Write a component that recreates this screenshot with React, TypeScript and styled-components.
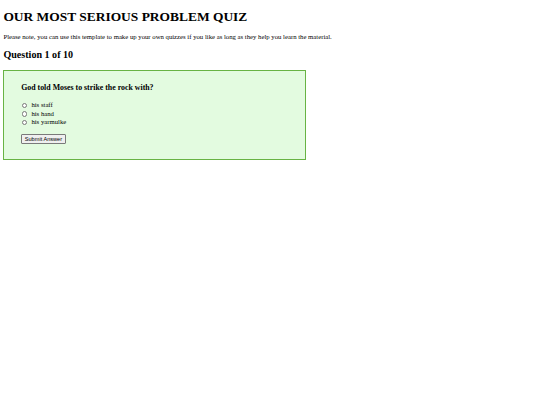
import React from "react";
import styled, { createGlobalStyle } from "styled-components";

const Global = createGlobalStyle`
  html, body { margin: 0; padding: 0; background: #fff; }
  body { font-family: "Liberation Serif", "Times New Roman", serif; color: #000; }
`;

const Page = styled.div`
  padding: 0 3.4px;
`;

const Title = styled.h1`
  font-size: 13.44px;
  font-weight: bold;
  line-height: 15.4px;
  margin: 8.6px 0 0 0;
`;

const Note = styled.p`
  font-size: 6.72px;
  line-height: 7.7px;
  margin: 9px 0 0 0;
`;

const QNum = styled.h2`
  font-size: 10.08px;
  font-weight: bold;
  line-height: 11.6px;
  margin: 8.6px 0 0 0;
`;

const Card = styled.div`
  margin-top: 9px;
  width: 303px;
  box-sizing: border-box;
  border: 1.6px solid #68b344;
  background: #e3fbe0;
  padding: 12.2px 16px 15px 16.8px;
`;

const Form = styled.form`
  display: flex;
  flex-direction: column;
`;

const Question = styled.h3`
  font-size: 7.86px;
  font-weight: bold;
  line-height: 9px;
  margin: 0;
`;

const Options = styled.div`
  margin-top: 9.2px;
  display: flex;
  flex-direction: column;
`;

const Option = styled.label`
  display: flex;
  align-items: center;
  gap: 4px;
  font-size: 6.72px;
  line-height: 8.5px;
  height: 8.5px;
`;

const Radio = styled.input.attrs({ type: "radio" })`
  appearance: none;
  width: 5.2px;
  height: 5.2px;
  margin: 0 0 0 1px;
  border: 0.6px solid #7a7a7a;
  border-radius: 50%;
  background: #fff;
  box-sizing: border-box;
  flex: none;
`;

const Submit = styled.button`
  margin-top: 7.5px;
  align-self: flex-start;
  font-family: "Liberation Sans", Arial, sans-serif;
  font-size: 5.6px;
  line-height: 6.5px;
  padding: 0.6px 2.6px;
  border: 0.6px solid #7a7a7a;
  border-radius: 1px;
  background: #efefef;
  color: #000;
`;

export default function App() {
  const options = ["his staff", "his hand", "his yarmulke"];
  return (
    <>
      <Global />
      <Page>
        <Title>OUR MOST SERIOUS PROBLEM QUIZ</Title>
        <Note>
          Please note, you can use this template to make up your own quizzes if you like as long as they help you learn the material.
        </Note>
        <QNum>Question 1 of 10</QNum>
        <Card>
          <Form onSubmit={(e) => e.preventDefault()}>
            <Question>God told Moses to strike the rock with?</Question>
            <Options>
              {options.map((o) => (
                <Option key={o}>
                  <Radio name="answer" value={o} />
                  {o}
                </Option>
              ))}
            </Options>
            <Submit type="submit">Submit Answer</Submit>
          </Form>
        </Card>
      </Page>
    </>
  );
}
